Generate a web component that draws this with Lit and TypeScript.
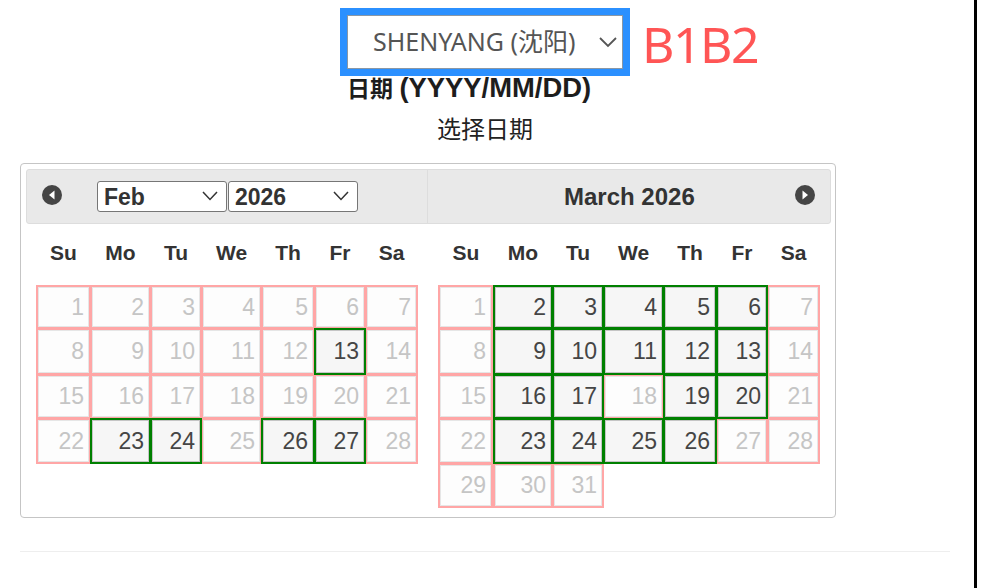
import { LitElement, html, css } from "lit";
import { customElement } from "lit/decorators.js";

const WEEK = ["Su", "Mo", "Tu", "We", "Th", "Fr", "Sa"];
const FEB_OPEN = [13, 23, 24, 26, 27];
const MAR_OPEN = [2, 3, 4, 5, 6, 9, 10, 11, 12, 13, 16, 17, 19, 20, 23, 24, 25, 26];

@customElement("app-root")
export class AppRoot extends LitElement {
  static styles = css`
    :host {
      display: block;
      box-sizing: border-box;
      width: 977px;
      height: 588px;
      background: #fff;
      border-right: 3px solid #000;
      font-family: "Liberation Sans", "Noto Sans CJK SC", sans-serif;
      color: #222;
      overflow: hidden;
    }
    .top {
      display: flex;
      align-items: center;
      gap: 12px;
      padding: 8px 0 0 340px;
    }
    .picked {
      box-sizing: border-box;
      flex: none;
      width: 290px;
      height: 68px;
      border: 7px solid #2b90ff;
      outline: 1px solid #8a97a5;
      outline-offset: -8px;
      display: flex;
      align-items: center;
      justify-content: space-between;
      padding: 0 5px 4px 26px;
      font-family: "Noto Sans", "Noto Sans CJK SC", sans-serif;
      font-size: 25px;
      color: #555;
    }
    .picked svg { display: block; margin-top: 4px; }
    .tag {
      font-family: "Noto Sans", sans-serif;
      font-size: 50px;
      line-height: 64px;
      letter-spacing: -1.5px;
      color: #ff5555;
      padding-top: 4px;
    }
    .label {
      margin: -1px 0 0 347px;
      font-size: 23px;
      font-weight: 700;
      line-height: 26px;
      height: 26px;
      color: #1d1d1d;
    }
    .label span { font-size: 27.4px; }
    .hint {
      margin: 0 0 0 437px;
      padding-top: 15px;
      font-size: 24px;
      line-height: 28px;
      color: #222;
    }
    .widget {
      box-sizing: border-box;
      width: 816px;
      margin: 19px 0 0 20px;
      padding: 5px 4px 10px 5px;
      border: 1px solid #c5c5c5;
      border-radius: 4px;
    }
    .head {
      box-sizing: border-box;
      display: flex;
      height: 55px;
      background: #e9e9e9;
      border: 1px solid #dddddd;
      border-radius: 3px;
      color: #333;
    }
    .head-left {
      box-sizing: border-box;
      width: 401px;
      display: flex;
      align-items: center;
      padding: 0 0 0 14px;
      border-right: 1px solid #dddddd;
    }
    .head-right {
      flex: 1;
      display: flex;
      align-items: center;
      justify-content: space-between;
      padding: 0 14px 0 136px;
      font-size: 24px;
      font-weight: 700;
    }
    .nav { display: block; flex: none; margin-top: -3px; }
    .selects { display: flex; gap: 1px; margin: 0 0 0 34px; }
    .sel { position: relative; display: block; height: 31px; }
    .sel svg { position: absolute; right: 9px; top: 10px; pointer-events: none; }
    select {
      appearance: none;
      display: block;
      box-sizing: border-box;
      width: 130px;
      height: 31px;
      font: 700 23px "Liberation Sans", sans-serif;
      color: #333;
      background: #fff;
      border: 1px solid #767676;
      border-radius: 3px;
      padding: 0 0 0 6px;
    }
    .months {
      display: flex;
      gap: 21px;
      padding-left: 10px;
    }
    .wk, .days { display: grid; }
    .feb { grid-template-columns: 54px 60px 51px 60px 53px 51px 52px; }
    .mar { grid-template-columns: 55px 59px 51px 60px 53px 51px 52px; }
    .wk {
      height: 61px;
      align-items: center;
      font-size: 21px;
      font-weight: 700;
      color: #333;
      text-align: center;
    }
    .wk span { padding-bottom: 3px; margin-right: -1px; }
    .days { grid-template-rows: 43px 46px 44px 45px 44px; }
    .cell {
      position: relative;
      box-sizing: border-box;
      margin: 0 -1px -1px 0;
      border: 2px solid #ffa6a6;
      display: flex;
    }
    .mar .cell:nth-child(7n + 1) { margin-right: 0; }
    .cell b {
      flex: 1;
      box-sizing: border-box;
      display: flex;
      align-items: center;
      justify-content: flex-end;
      border: 1px solid #e6e6e6;
      background: #fdfdfd;
      color: #c5c5c5;
      font-weight: 400;
      font-size: 23px;
      padding-right: 4px;
    }
    .cell.open {
      z-index: 1;
      border-color: #008000;
    }
    .cell.open b {
      border-color: #c5c5c5;
      background: #f6f6f6;
      color: #454545;
    }
    .rule {
      width: 930px;
      height: 1px;
      margin: 33px 0 0 20px;
      background: #eeeeee;
    }
  `;

  private month(cls: string, count: number, open: number[]) {
    const days = Array.from({ length: count }, (_, i) => i + 1);
    return html`<div>
      <div class="wk ${cls}">${WEEK.map((d) => html`<span>${d}</span>`)}</div>
      <div class="days ${cls}">
        ${days.map(
          (d) => html`<div class="cell ${open.includes(d) ? "open" : ""}"><b>${d}</b></div>`
        )}
      </div>
    </div>`;
  }

  private chevron() {
    return html`<svg width="16" height="10" viewBox="0 0 16 10">
      <path d="M1 1l7 7.5L15 1" fill="none" stroke="#333" stroke-width="1.5" />
    </svg>`;
  }

  render() {
    return html`
      <div class="top">
        <div class="picked">
          <span>SHENYANG (沈阳)</span>
          <svg width="20" height="12" viewBox="0 0 20 12">
            <path d="M2 2l8 8 8-8" fill="none" stroke="#555" stroke-width="1.8" />
          </svg>
        </div>
        <span class="tag">B1B2</span>
      </div>
      <div class="label">日期 <span>(YYYY/MM/DD)</span></div>
      <div class="hint">选择日期</div>
      <div class="widget">
        <div class="head">
          <div class="head-left">
            <svg class="nav" width="22" height="22" viewBox="0 0 22 22">
              <circle cx="11" cy="11" r="10" fill="#454545" />
              <path d="M13.5 6.5v9L8 11z" fill="#fff" />
            </svg>
            <div class="selects">
              <span class="sel"><select><option>Feb</option></select>${this.chevron()}</span>
              <span class="sel"><select><option>2026</option></select>${this.chevron()}</span>
            </div>
          </div>
          <div class="head-right">
            <span>March 2026</span>
            <svg class="nav" width="22" height="22" viewBox="0 0 22 22">
              <circle cx="11" cy="11" r="10" fill="#454545" />
              <path d="M8.5 6.5v9L14 11z" fill="#fff" />
            </svg>
          </div>
        </div>
        <div class="months">
          ${this.month("feb", 28, FEB_OPEN)} ${this.month("mar", 31, MAR_OPEN)}
        </div>
      </div>
      <div class="rule"></div>
    `;
  }
}
